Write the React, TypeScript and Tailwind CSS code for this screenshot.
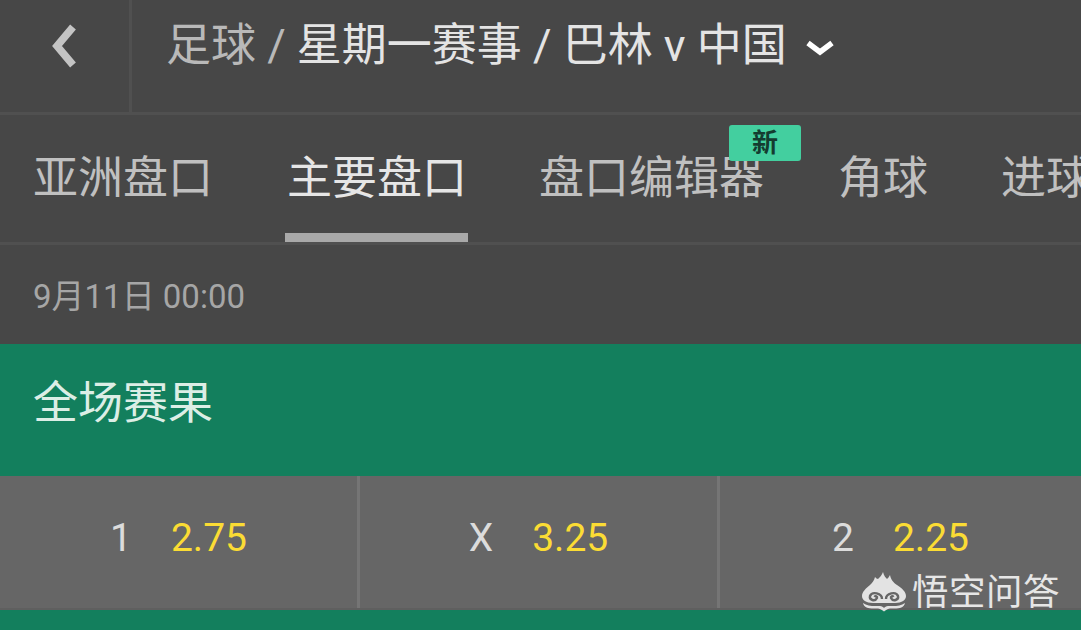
const font = { fontFamily: '"Roboto","Noto Sans CJK SC",sans-serif' };

function Odds({ label, value, border }: { label: string; value: string; border?: boolean }) {
  return (
    <div className={`relative flex items-center justify-center gap-[39px] pb-[8px] ${border ? "border-r-[3px] border-[#757575]" : ""}`}>
      <span className="text-[39px] leading-[48px] text-[#dcdcdc]">{label}</span>
      <span className="text-[39px] leading-[48px] text-[#fbdc34]">{value}</span>
    </div>
  );
}

export default function App() {
  return (
    <div className="relative h-[630px] w-[1081px] overflow-hidden bg-[#474747]" style={font}>
      <header className="flex h-[115px] border-b-[3px] border-[#505050]">
        <div className="flex w-[132px] shrink-0 items-start justify-center border-r-[3px] border-[#505050] pt-[23px]">
          <svg width="30" height="46" viewBox="0 0 30 46" className="-ml-[1px]">
            <path d="M24 4 L8 23 L24 42" fill="none" stroke="#c4c4c4" strokeWidth="7.5" />
          </svg>
        </div>
        <div className="flex h-[92px] items-center pl-[34px] text-[45px] leading-[60px] whitespace-nowrap">
          <span className="text-[#b9b9b9]">足球 / </span>
          <span className="ml-[11px] text-[#e4e4e4]">星期一赛事 / 巴林 v 中国</span>
          <svg width="30" height="18" viewBox="0 0 30 18" className="mt-[4px] ml-[18px]">
            <path d="M3 4 L15 13 L27 4" fill="none" stroke="#ffffff" strokeWidth="5.5" />
          </svg>
        </div>
      </header>

      <nav className="flex h-[130px] overflow-hidden border-b-[3px] border-[#505050] pl-[33px] text-[45px] whitespace-nowrap text-[#c0c0c0]">
        <span className="pt-[34px] leading-[60px]">亚洲盘口</span>
        <span className="ml-[74px] flex h-[127px] w-[180px] flex-col items-center">
          <span className="h-[118px] pt-[34px] leading-[60px] text-[#e6e6e6]">主要盘口</span>
          <span className="-ml-[2px] h-[9px] w-[183px] shrink-0 bg-[#a9a9a9]" />
        </span>
        <span className="relative ml-[72px] pt-[34px] leading-[60px]">
          盘口编辑器
          <span className="absolute top-[10px] left-[190px] flex h-[36px] w-[72px] items-center justify-center rounded-[3px] bg-[#43cf9f] text-[26px] font-bold text-[#143c30]">
            新
          </span>
        </span>
        <span className="ml-[74px] pt-[34px] leading-[60px]">角球</span>
        <span className="ml-[73px] pt-[34px] leading-[60px]">进球</span>
      </nav>

      <div className="flex h-[99px] items-center pt-[4px] pl-[33px] text-[33px] text-[#a6a6a6]">9月11日 00:00</div>

      <div className="flex h-[132px] items-center bg-[#137f5d] pb-[12px] pl-[33px] text-[45px] text-[#dceee6]">全场赛果</div>

      <div className="grid h-[132px] grid-cols-[360px_360px_361px] bg-[#666666]">
        <Odds label="1" value="2.75" border />
        <Odds label="X" value="3.25" border />
        <Odds label="2" value="2.25" />
      </div>

      <div className="h-[22px] border-t-[2px] border-[#5f5f5f] bg-[#137f5d]" />

      <div className="absolute top-[568px] left-[862px] flex items-center">
        <svg width="44" height="40" viewBox="0 0 44 40">
          <path
            d="M21 0 C22 4 24 6 25 7 C26 6 27 5 28 3 C29 8 31 10 35 13 C40 16 44 20 44 24 C44 28 40 31 33 31 L11 31 C4 31 0 28 0 24 C0 20 4 16 8 13 C10 11 12 9 13 5 C14 6 15 7 16 7 C18 5 20 3 21 0 Z"
            fill="#e3e3e3"
          />
          <path
            d="M1 31 C6 35 14 34 18 34 C20 34 21 35 22 36 C23 35 24 34 26 34 C30 34 38 35 43 31 C42 36 36 37 30 36.5 C27 36.5 25 37 22 39.5 C19 37 17 36.5 14 36.5 C8 37 2 36 1 31 Z"
            fill="#e3e3e3"
          />
          <path
            d="M20 27 C20 21 10 19 8 24 C7 28 13 30 15 26 C15.5 24.5 13.5 23.5 12.5 25 M24 27 C24 21 34 19 36 24 C37 28 31 30 29 26 C28.5 24.5 30.5 23.5 31.5 25"
            fill="none"
            stroke="#666666"
            strokeWidth="2.4"
          />
        </svg>
        <span className="mt-[3px] ml-[6px] text-[36.5px] leading-[44px] font-normal tracking-[0.5px] whitespace-nowrap text-[#e6e6e6]">悟空问答</span>
      </div>
    </div>
  );
}
